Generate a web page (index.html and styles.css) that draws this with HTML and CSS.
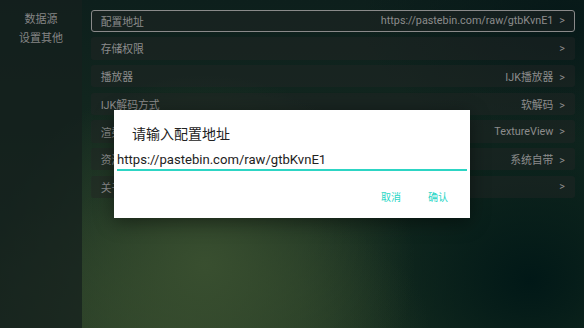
FILE: index.html
```html
<!DOCTYPE html>
<html lang="zh-CN">
<head>
  <meta charset="UTF-8" />
  <meta name="viewport" content="width=device-width, initial-scale=1.0"/>
  <title>设置</title>
  <link rel="stylesheet" href="styles.css">
</head>
<body>
  <div class="screen">
    <div class="sidebar">
      <div class="side-item">数据源</div>
      <div class="side-item">设置其他</div>
    </div>

    <div class="settings">
      <div class="row focused">
        <span>配置地址</span>
        <span class="value">https://pastebin.com/raw/gtbKvnE1<i>&gt;</i></span>
      </div>
      <div class="row">
        <span>存储权限</span>
        <span class="value"><i>&gt;</i></span>
      </div>
      <div class="row">
        <span>播放器</span>
        <span class="value">IJK播放器<i>&gt;</i></span>
      </div>
      <div class="row">
        <span>IJK解码方式</span>
        <span class="value">软解码<i>&gt;</i></span>
      </div>
      <div class="row">
        <span>渲染方式</span>
        <span class="value">TextureView<i>&gt;</i></span>
      </div>
      <div class="row">
        <span>资源嗅探</span>
        <span class="value">系统自带<i>&gt;</i></span>
      </div>
      <div class="row">
        <span>关于</span>
        <span class="value"><i>&gt;</i></span>
      </div>
    </div>

    <!-- input dialog -->
    <div class="dialog">
      <div class="dialog-title">请输入配置地址</div>
      <div class="dialog-input">https://pastebin.com/raw/gtbKvnE1</div>
      <div class="dialog-actions">
        <a class="dialog-btn">取消</a>
        <a class="dialog-btn">确认</a>
      </div>
    </div>
  </div>
</body>
</html>
```

FILE: styles.css
```css
* {
  margin: 0;
  padding: 0;
  box-sizing: border-box;
}

body {
  width: 584px;
  height: 328px;
  overflow: hidden;
  font-family: Roboto, "Noto Sans CJK SC", sans-serif;
  background-color: #0b1f1c;
  background-image:
    radial-gradient(ellipse 210px 190px at 205px 265px, rgba(58, 80, 48, 0.95), rgba(58, 80, 48, 0) 100%),
    radial-gradient(ellipse 260px 140px at 170px 330px, rgba(50, 70, 42, 0.8), rgba(50, 70, 42, 0) 100%),
    radial-gradient(ellipse 230px 200px at 530px 280px, rgba(1, 24, 23, 1), rgba(1, 24, 23, 0) 100%),
    radial-gradient(ellipse 200px 120px at 560px 20px, rgba(6, 24, 24, 0.9), rgba(6, 24, 24, 0) 100%),
    linear-gradient(180deg, #0d1f1c 0%, #13281f 45%, #1c3322 100%);
}

.screen {
  position: relative;
  display: flex;
  height: 328px;
}

.sidebar {
  width: 82px;
  padding-top: 9.5px;
  background: rgba(22, 32, 30, 0.75);
}

.side-item {
  font-size: 11px;
  line-height: 19px;
  color: #858585;
  text-align: center;
}

.settings {
  flex: 1;
  display: flex;
  flex-direction: column;
  gap: 5.2px;
  padding: 9.5px 9.5px 0 9.2px;
}

.row {
  height: 22.5px;
  display: flex;
  align-items: center;
  justify-content: space-between;
  padding: 0 9.5px;
  border-radius: 3px;
  background: rgba(36, 38, 38, 0.45);
  font-size: 10.8px;
  color: #8c8c8c;
}

.row.focused {
  border: 1px solid #8a8a8a;
  padding: 0 8.5px;
}

.value i {
  font-style: normal;
  margin-left: 6px;
}

.dialog {
  position: absolute;
  left: 114px;
  top: 110px;
  width: 356px;
  height: 108px;
  background: #fff;
  box-shadow: 0 4px 18px rgba(0, 0, 0, 0.45);
  padding: 14px 3px 0 3px;
}

.dialog-title {
  font-size: 14px;
  line-height: 20px;
  color: #222;
  padding-left: 15px;
}

.dialog-input {
  margin-top: 7px;
  font-size: 13.1px;
  line-height: 18px;
  color: #222;
  border-bottom: 2px solid #2dd5c4;
}

.dialog-actions {
  display: flex;
  justify-content: flex-end;
  gap: 27px;
  margin-top: 20px;
  padding-right: 19px;
}

.dialog-btn {
  font-size: 10px;
  line-height: 14px;
  color: #1fd6c6;
  cursor: pointer;
}
```
